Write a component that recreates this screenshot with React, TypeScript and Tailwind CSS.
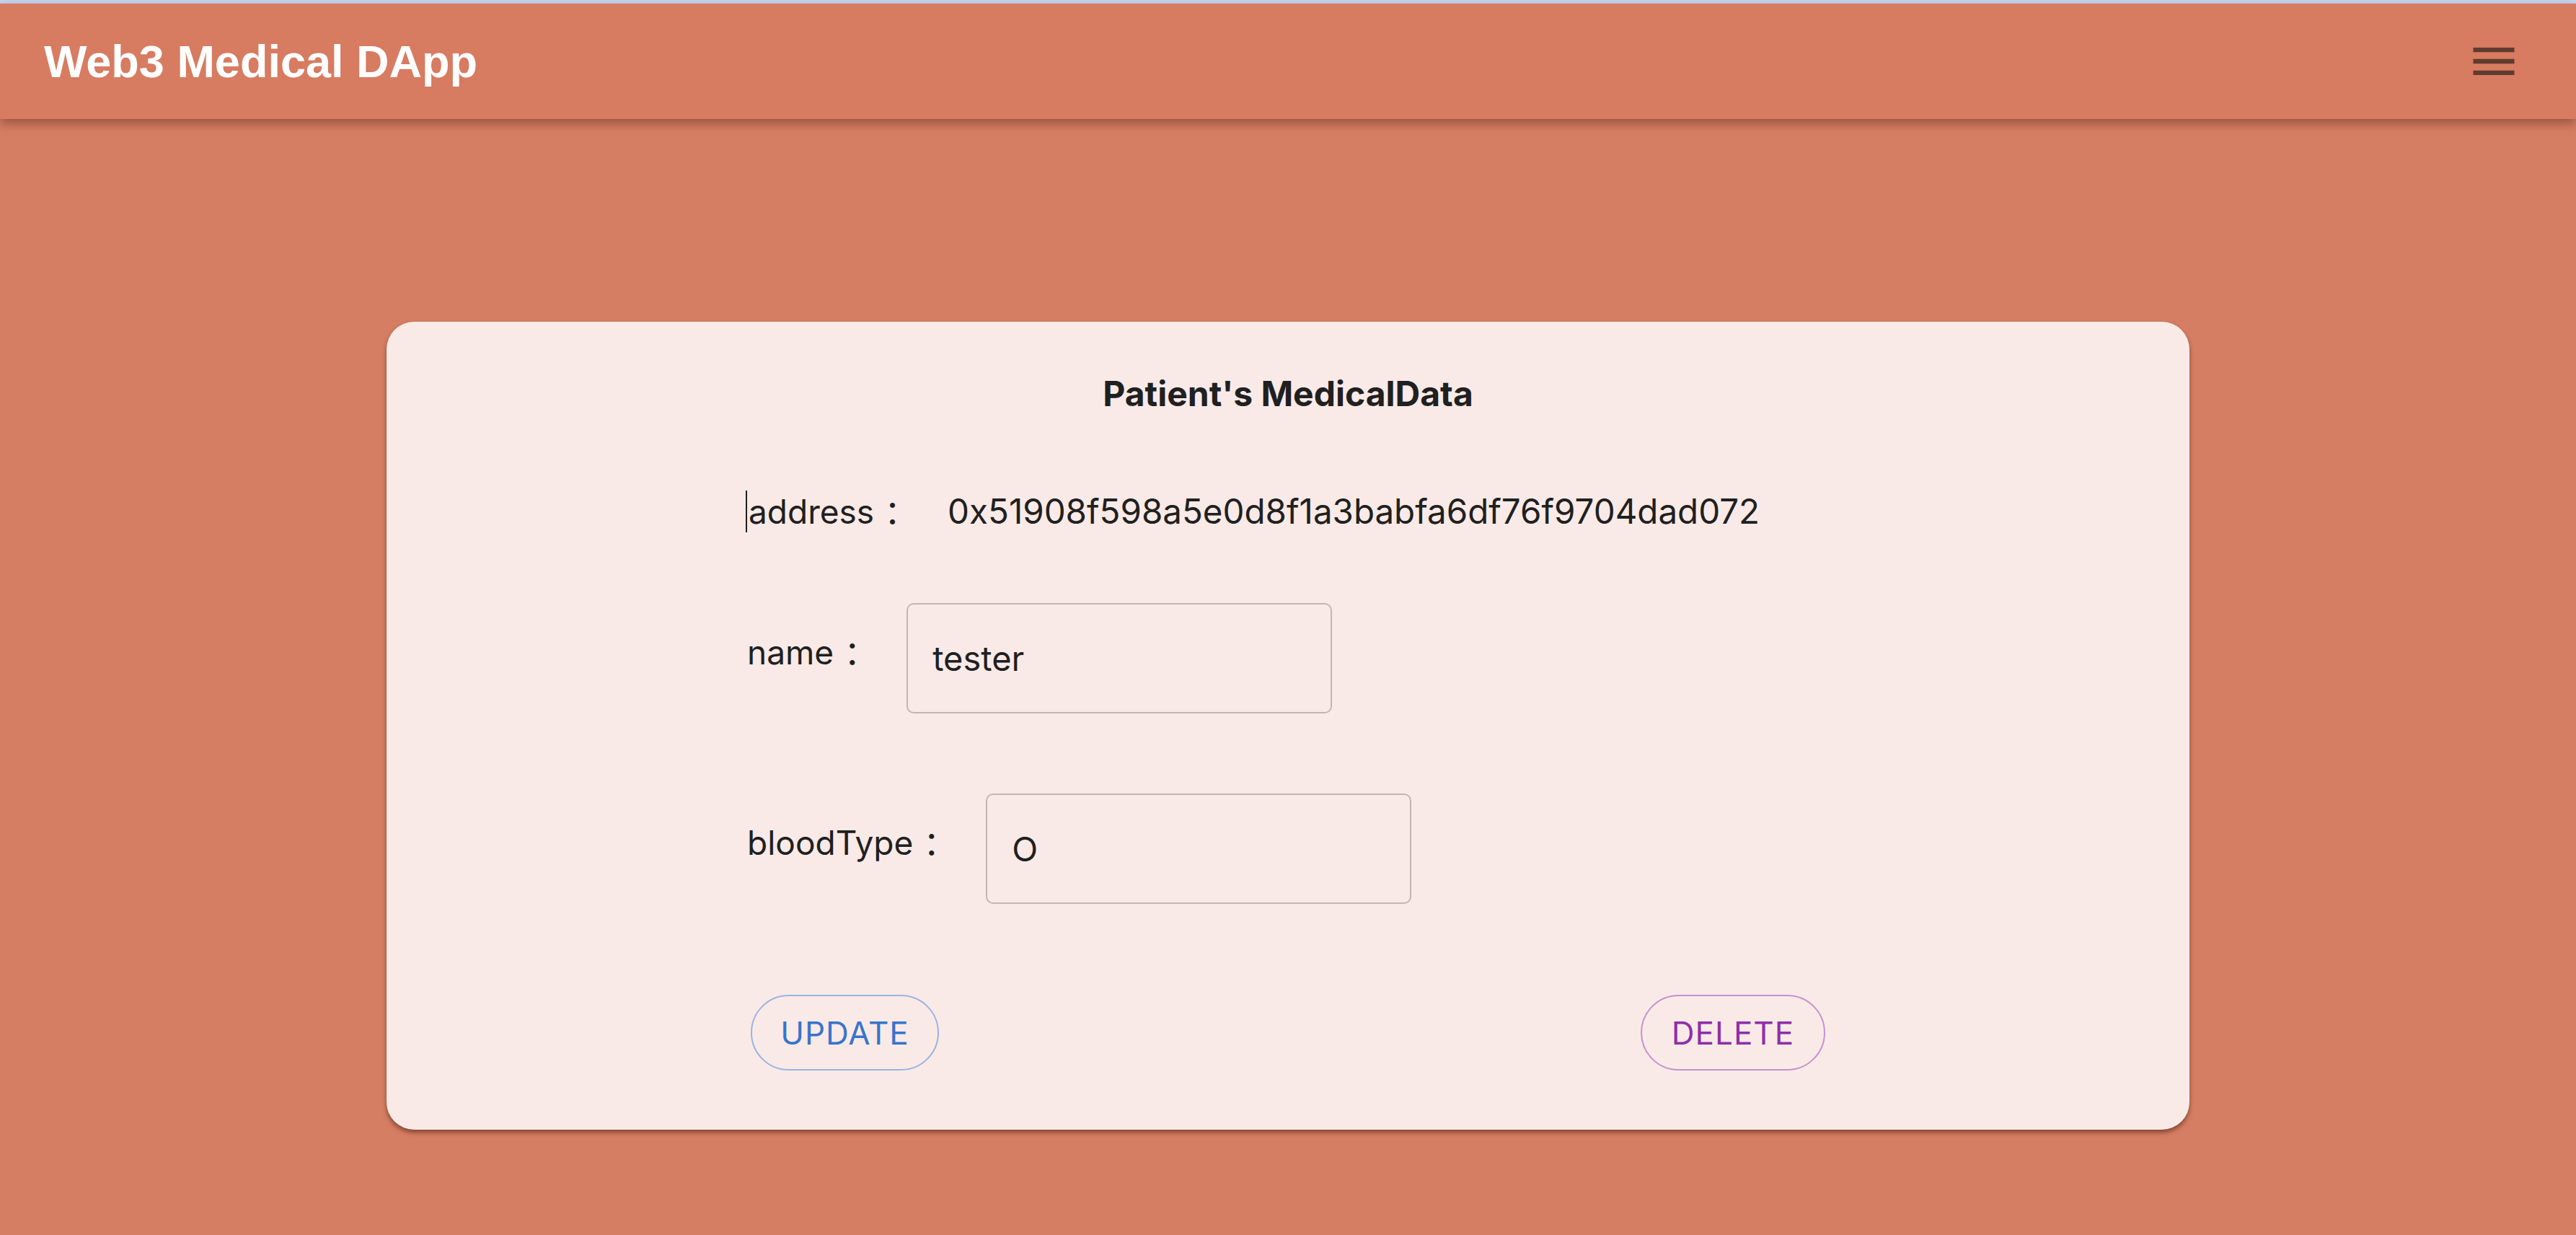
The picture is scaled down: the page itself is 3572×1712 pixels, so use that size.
const font = "font-['Inter','Noto_Sans_CJK_SC',sans-serif]";

const Colon = () => <span className="inline-block w-[48px] pl-[14px] whitespace-nowrap">：</span>;

const Field = ({ label, value }: { label: string; value: string }) => (
    <div className="flex items-center h-[153px]">
        <span className="text-[46px] leading-none text-[#202020] mb-[17px] whitespace-nowrap">
            {label}
            <Colon />
        </span>
        <input
            readOnly
            defaultValue={value}
            className="ml-[53px] w-[590px] h-[153px] rounded-[10px] border-2 border-[#c3b5b2] bg-transparent pl-[34px] text-[47px] text-[#202020] outline-none"
        />
    </div>
);

const App = () => {
    return (
        <div className={`min-h-screen h-[1712px] bg-[#d67e63] ${font}`}>
            {/* browser strip */}
            <div className="h-[5px] bg-[#c6d6ef]" />

            {/* App bar */}
            <header className="relative z-10 flex items-center justify-between h-[160px] pl-[61px] pr-[76px] bg-[#d77b61] shadow-[0_6px_14px_rgba(80,30,15,0.45)]">
                <h1 className="font-['Liberation_Sans',Arial,sans-serif] font-bold text-[63px] leading-none text-white">
                    Web3 Medical DApp
                </h1>
                <svg viewBox="0 0 24 24" className="w-[76px] h-[76px] fill-[#5f3b2f]">
                    <path d="M3 18h18v-2H3v2zm0-5h18v-2H3v2zm0-7v2h18V6H3z" />
                </svg>
            </header>

            {/* Card */}
            <main className="pt-[281px]">
                <section className="mx-auto w-[2500px] rounded-[38px] bg-[#f9eae7] pt-[50px] pb-[82px] px-[500px] shadow-[0_4px_6px_rgba(70,25,10,0.55)]">
                    <h2 className="flex items-center justify-center h-[100px] text-[48px] font-bold leading-none text-[#202020]">
                        Patient's MedicalData
                    </h2>

                    <div className="mt-[63px] flex items-center h-[100px] text-[46px] leading-none text-[#202020] whitespace-nowrap">
                        <span className="-ml-[2px] inline-block w-[2px] h-[58px] bg-[#202020]" />
                        <span className="ml-[2px]">address</span>
                        <Colon />
                        <span className="ml-[54px] text-[47.5px]">0x51908f598a5e0d8f1a3babfa6df76f9704dad072</span>
                    </div>

                    <div className="mt-[77px]">
                        <Field label="name" value="tester" />
                    </div>
                    <div className="mt-[111px]">
                        <Field label="bloodType" value="O" />
                    </div>

                    <div className="mt-[126px] flex items-center justify-between px-[5px]">
                        <button className="w-[261px] h-[105px] rounded-full border-2 border-[#9cb3e0] text-[44px] tracking-[1px] text-[#3874cb]">
                            UPDATE
                        </button>
                        <button className="w-[256px] h-[105px] rounded-full border-2 border-[#c790cf] text-[44px] tracking-[1px] text-[#8e2fa8]">
                            DELETE
                        </button>
                    </div>
                </section>
            </main>
        </div>
    );
};

export default App;
